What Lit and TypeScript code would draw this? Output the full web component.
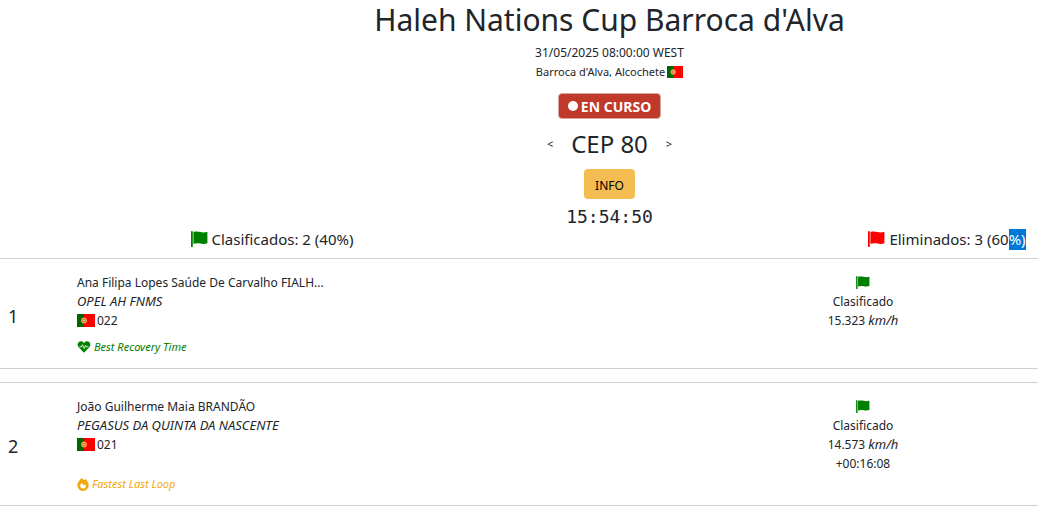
import { LitElement, html, css, svg, nothing } from "lit";
import { customElement } from "lit/decorators.js";

interface Entry {
  rank: number;
  rider: string;
  horse: string;
  bib: string;
  speed: string;
  gap?: string;
  award: "recovery" | "loop";
}

const entries: Entry[] = [
  { rank: 1, rider: "Ana Filipa Lopes Saúde De Carvalho FIALH...", horse: "OPEL AH FNMS", bib: "022", speed: "15.323", award: "recovery" },
  { rank: 2, rider: "João Guilherme Maia BRANDÃO", horse: "PEGASUS DA QUINTA DA NASCENTE", bib: "021", speed: "14.573", gap: "+00:16:08", award: "loop" },
];

const portugal = html`<svg class="country" viewBox="0 0 18 13" role="img" aria-label="Portugal" preserveAspectRatio="none">
  <rect width="18" height="13" fill="#f00" />
  <rect width="7" height="13" fill="#060" />
  <circle cx="7" cy="6.5" r="2.9" fill="#e8b040" />
  <circle cx="7" cy="6.5" r="1.7" fill="#e8604a" />
  <circle cx="7" cy="6.5" r="0.8" fill="#f4d8b0" />
</svg>`;

const flag = html`<svg class="flag" viewBox="0 0 17 16" aria-hidden="true">
  <path d="M0 0.6Q0 0 .8 0Q1.8 0 1.8 .6V16H0z" />
  <path d="M2.4 1C5.2 .2 7.2 .5 9.3 1C11.8 1.6 13.8 1.5 16.4 .8V12.3C13.8 13.1 11.6 13 9.2 12.5C7 12 5 12 2.4 12.8z" />
</svg>`;

const awards = {
  recovery: {
    label: "Best Recovery Time",
    icon: svg`<svg class="heart" viewBox="0 0 26 24" aria-hidden="true">
      <path fill="currentColor" d="M13 23.5L2.4 12.6C-.6 9.4-.3 4.6 2.6 2.1C5.8-.6 10.2.1 13 3.9C15.8.1 20.2-.6 23.4 2.1C26.3 4.6 26.6 9.4 23.6 12.6z" />
      <path fill="none" stroke="#fff" stroke-width="1.8" stroke-linejoin="round" d="M4 11.5H8L10 7.5L13.5 15L16.5 9L18 11.5H22" />
    </svg>`,
  },
  loop: {
    label: "Fastest Last Loop",
    icon: svg`<svg class="fire" viewBox="0 0 448 512" aria-hidden="true">
      <path fill="currentColor" d="M159.3 5.4c7.8-7.3 19.9-7.2 27.7 .1c27.6 25.9 53.5 53.8 77.7 84c11-14.4 23.5-30.1 37-42.9c7.9-7.4 20.1-7.4 28 .1c34.6 33 63.9 76.6 84.5 118c20.3 40.8 33.8 82.5 33.8 111.9C448 404.2 348.2 512 224 512C98.4 512 0 404.1 0 276.5c0-38.4 17.8-85.3 45.4-131.7C73.3 97.7 112.7 48.6 159.3 5.4zM225.7 416c25.3 0 47.7-7 68.8-21c42.1-29.4 53.4-88.2 28.1-134.4c-4.5-9-16-9.6-22.5-2l-25.2 29.3c-6.6 7.6-18.5 7.4-24.7-.5c-16.5-21-46-58.5-62.8-79.8c-6.3-8-18.3-8.1-24.7-.1c-33.8 42.5-50.8 69.3-50.8 99.4C112 375.4 162.6 416 225.7 416z" />
    </svg>`,
  },
};

@customElement("app-root")
export class AppRoot extends LitElement {
  static styles = css`
    :host {
      display: block;
      background: #fff;
      color: #212529;
      font: 12px/19px "Segoe UI", "Noto Sans", sans-serif;
    }
    h1, h2, p, ol { margin: 0; padding: 0; font-weight: 400; }
    button { font-family: inherit; color: inherit; border: 0; padding: 0; background: none; cursor: pointer; }
    svg { flex: none; }
    em { font-size: 13px; }
    .head { display: flex; flex-direction: column; align-items: center; padding-left: 181px; }
    h1 { font-size: 30px; line-height: 40px; margin-bottom: 2px; white-space: nowrap; }
    .date { line-height: 22px; }
    .place { display: flex; align-items: center; gap: 2px; font-size: 11px; line-height: 16px; }
    .country { display: block; width: 18px; height: 13px; }
    .place .country { width: 16px; height: 12px; }
    .state {
      display: flex; align-items: center; gap: 3px; box-sizing: border-box; height: 26px; margin-top: 13px; padding: 0 9px;
      border: 1px solid #dba49f; border-radius: 4px; background: #c0392b; color: #fff;
      font-size: 14px; font-weight: 700;
    }
    .dot { width: 10px; height: 10px; border-radius: 50%; background: #fff; }
    .stage { display: flex; align-items: center; gap: 17px; height: 49px; margin-bottom: 1px; }
    h2 { font-size: 24px; line-height: 32px; }
    .step { font-size: 11px; width: 8px; }
    .info { height: 30px; padding: 2px 11px 0; border-radius: 4px; background: #f3bd52; color: #000; font-size: 12px; }
    .clock { font: 18px/20px Consolas, "DejaVu Sans Mono", monospace; margin-top: 8px; }
    .totals { display: grid; grid-template-columns: 544fr 312fr 182fr; line-height: 24px; font-size: 15px; padding-bottom: 7px; }
    .total { display: flex; align-items: center; justify-content: center; gap: 4px; white-space: nowrap; }
    .out { grid-column: 3; }
    .flag { width: 17px; height: 16px; fill: #008000; }
    .out .flag { fill: #f00; }
    .marked { display: inline-block; line-height: 21px; background: #0078d7; color: #fff; }
    .list { list-style: none; display: grid; gap: 13px; }
    .card {
      display: grid; grid-template-columns: 69px 1fr 200px; align-items: center;
      padding: 14px 75px 13px 8px; border: solid #ced0d2; border-width: 1px 0;
    }
    .rank { grid-row: 1 / 3; padding-top: 3px; font-size: 18px; line-height: 24px; }
    .rider { align-self: start; min-height: 63px; }
    .bib { display: flex; align-items: center; gap: 2px; }
    .result { align-self: start; display: flex; flex-direction: column; align-items: center; }
    .mark { display: flex; align-items: center; height: 19px; }
    .result .flag { width: 14px; height: 13px; }
    .award { grid-column: 2; display: flex; align-items: center; gap: 3px; margin-top: 3px; font-size: 11px; line-height: 16px; font-style: italic; }
    .recovery { color: #008000; }
    .loop { color: #f5a70e; }
    .heart { width: 14px; height: 12px; }
    .fire { width: 12px; height: 13px; }
  `;

  render() {
    return html`
      <header class="head">
        <h1>Haleh Nations Cup Barroca d'Alva</h1>
        <p class="date">31/05/2025 08:00:00 WEST</p>
        <p class="place">Barroca d'Alva, Alcochete ${portugal}</p>
        <p class="state"><span class="dot"></span>EN CURSO</p>
        <nav class="stage">
          <button class="step">&lt;</button>
          <h2>CEP 80</h2>
          <button class="step">&gt;</button>
        </nav>
        <button class="info">INFO</button>
        <time class="clock">15:54:50</time>
      </header>
      <section class="totals">
        <p class="total">${flag}<span>Clasificados: 2 (40%)</span></p>
        <p class="total out">${flag}<span>Eliminados: 3 (60<span class="marked">%)</span></span></p>
      </section>
      <ol class="list">
        ${entries.map((e) => html`
          <li class="card">
            <span class="rank">${e.rank}</span>
            <div class="rider">
              <p>${e.rider}</p>
              <p><em>${e.horse}</em></p>
              <p class="bib">${portugal}${e.bib}</p>
            </div>
            <div class="result">
              <span class="mark">${flag}</span>
              <p>Clasificado</p>
              <p>${e.speed} <em>km/h</em></p>
              ${e.gap ? html`<p>${e.gap}</p>` : nothing}
            </div>
            <p class="award ${e.award}">${awards[e.award].icon}${awards[e.award].label}</p>
          </li>`)}
      </ol>`;
  }
}
